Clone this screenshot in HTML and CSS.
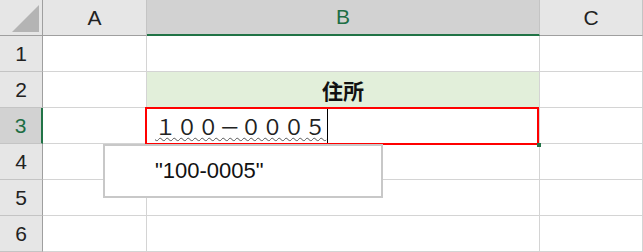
FILE: index.html
```html
<!DOCTYPE html>
<html lang="ja">
<head>
  <meta charset="UTF-8">
  <title>住所 - Sheet</title>
  <link rel="stylesheet" href="styles.css">
</head>
<body>
  <div class="sheet">
    <div class="grid">
      <div class="hd corner"><span class="tri"></span></div>
      <div class="hd col">A</div>
      <div class="hd col col-sel">B</div>
      <div class="hd col">C</div>

      <div class="hd row">1</div>
      <div class="cell"></div>
      <div class="cell"></div>
      <div class="cell"></div>

      <div class="hd row">2</div>
      <div class="cell"></div>
      <div class="cell title">住所</div>
      <div class="cell"></div>

      <div class="hd row row-sel">3</div>
      <div class="cell"></div>
      <div class="cell editing"><span class="typed">１００－０００５</span><span class="caret"></span></div>
      <div class="cell"></div>

      <div class="hd row">4</div>
      <div class="cell"></div>
      <div class="cell"></div>
      <div class="cell"></div>

      <div class="hd row">5</div>
      <div class="cell"></div>
      <div class="cell"></div>
      <div class="cell"></div>

      <div class="hd row">6</div>
      <div class="cell"></div>
      <div class="cell"></div>
      <div class="cell"></div>
    </div>

    <!-- active cell frame and IME suggestion -->
    <div class="active-box"><span class="handle"></span></div>
    <div class="suggest">"100-0005"</div>
  </div>
</body>
</html>
```

FILE: styles.css
```css
body {
  margin: 0;
  background: #ffffff;
  font-family: "Liberation Sans", Arial, sans-serif;
}

.sheet {
  position: relative;
  width: 643px;
  height: 252px;
  overflow: hidden;
}

.grid {
  display: grid;
  grid-template-columns: 43px 104px 393px 103px;
  grid-template-rows: 36px repeat(6, 36px);
}

.grid > div {
  box-sizing: border-box;
  border-right: 1px solid #d4d4d4;
  border-bottom: 1px solid #d4d4d4;
}

.hd {
  background: #e6e6e6;
  color: #222222;
  font-size: 21px;
  display: flex;
  align-items: center;
  justify-content: center;
}

.grid > .col {
  border-bottom-color: #9f9f9f;
  border-right-color: #c4c4c4;
}

.grid > .row {
  border-right-color: #9f9f9f;
  border-bottom-color: #c4c4c4;
}

.grid > .corner {
  position: relative;
  border-right-color: #9f9f9f;
  border-bottom-color: #9f9f9f;
}

.tri {
  position: absolute;
  right: 3px;
  bottom: 3px;
  width: 0;
  height: 0;
  border-left: 27px solid transparent;
  border-bottom: 27px solid #b4b4b4;
}

.grid > .col-sel {
  background: #d2d2d2;
  color: #1e6e44;
  border-bottom: 2px solid #217346;
}

.grid > .row-sel {
  background: #d2d2d2;
  color: #1e6e44;
  border-right: 2px solid #217346;
}

.title {
  background: #e2efda;
  font-weight: bold;
  font-size: 21px;
  font-family: "Noto Sans CJK JP", sans-serif;
  display: flex;
  align-items: center;
  justify-content: center;
  color: #111111;
}

.editing {
  display: flex;
  align-items: center;
  padding-left: 8px;
}

.typed {
  font-family: "Noto Sans CJK JP", sans-serif;
  font-size: 21px;
  line-height: 24px;
  letter-spacing: 0.4px;
  color: #222222;
  text-decoration: underline wavy #555555;
  text-decoration-thickness: 1px;
  text-underline-offset: 2px;
}

.caret {
  align-self: stretch;
  width: 1px;
  background: #000000;
  margin-left: 1px;
}

.active-box {
  position: absolute;
  left: 145px;
  top: 107px;
  width: 394px;
  height: 38px;
  box-sizing: border-box;
  border: 2px solid #ff0000;
}

.handle {
  position: absolute;
  right: -4px;
  bottom: -4px;
  width: 4px;
  height: 4px;
  background: #217346;
}

.suggest {
  position: absolute;
  left: 103px;
  top: 144px;
  width: 280px;
  height: 54px;
  box-sizing: border-box;
  border: 2px solid #c8c8c8;
  background: #ffffff;
  padding-left: 50px;
  display: flex;
  align-items: center;
  font-size: 22px;
  color: #111111;
}
```
